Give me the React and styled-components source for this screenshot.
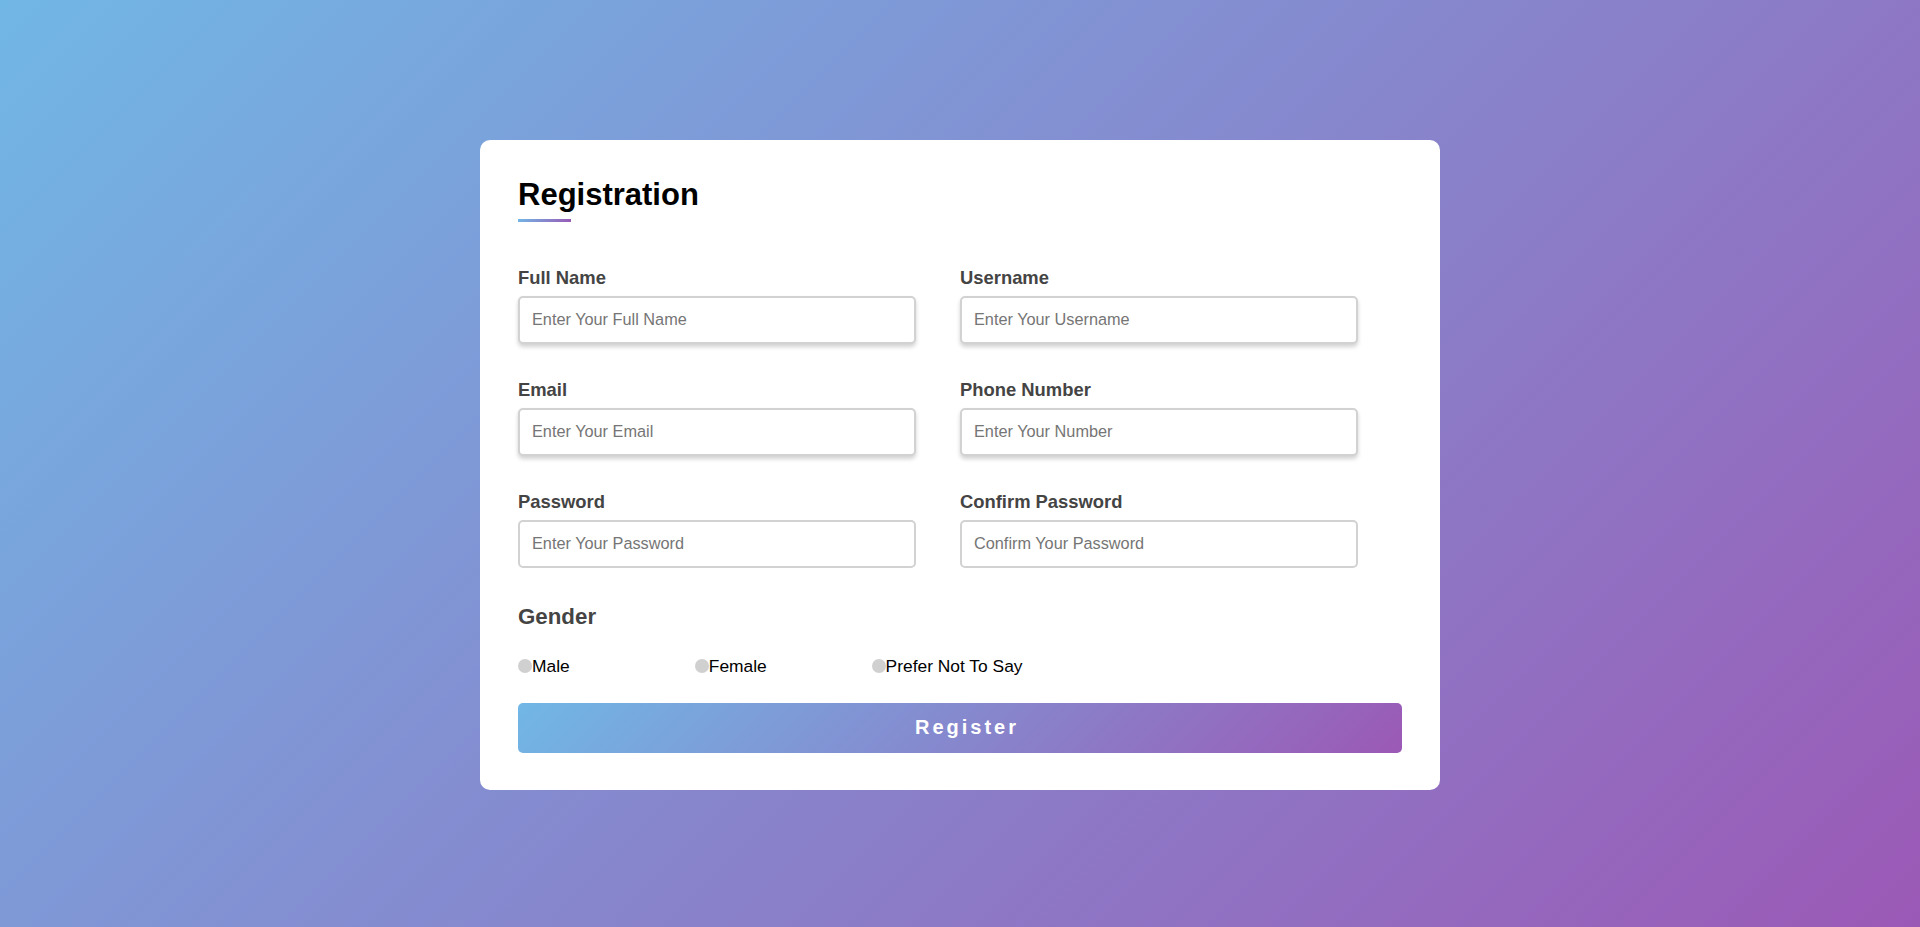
import React from "react";
import styled, { createGlobalStyle } from "styled-components";

const GlobalStyle = createGlobalStyle`
  * { box-sizing: border-box; }
  body {
    margin: 0;
    font-family: "Liberation Sans", Arial, sans-serif;
    background: linear-gradient(135deg, #71b7e6, #9b59b6);
    min-height: 100vh;
  }
`;

const fields = [
  { label: "Full Name", placeholder: "Enter Your Full Name", type: "text" },
  { label: "Username", placeholder: "Enter Your Username", type: "text" },
  { label: "Email", placeholder: "Enter Your Email", type: "email" },
  { label: "Phone Number", placeholder: "Enter Your Number", type: "tel" },
  { label: "Password", placeholder: "Enter Your Password", type: "password" },
  { label: "Confirm Password", placeholder: "Confirm Your Password", type: "password" },
];

const genders = ["Male", "Female", "Prefer Not To Say"];

const App = () => {
  return (
    <>
      <GlobalStyle />
      <Page>
        <Card>
          <Title>Registration</Title>
          <Underline />
          <Form onSubmit={(e) => e.preventDefault()}>
            <Grid>
              {fields.map((f) => (
                <Field key={f.label}>
                  <Label>{f.label}</Label>
                  <Input type={f.type} placeholder={f.placeholder} $flat={f.type === "password"} />
                </Field>
              ))}
            </Grid>
            <GenderTitle>Gender</GenderTitle>
            <GenderRow>
              {genders.map((g) => (
                <GenderOption key={g}>
                  <Radio type="radio" name="gender" />
                  {g}
                </GenderOption>
              ))}
            </GenderRow>
            <SubmitButton type="submit">Register</SubmitButton>
          </Form>
        </Card>
      </Page>
    </>
  );
};

export default App;

const Page = styled.div`
  min-height: 100vh;
  padding-top: 3px;
  display: flex;
  align-items: center;
  justify-content: center;
`;

const Card = styled.div`
  width: 960px;
  background: #fff;
  border-radius: 10px;
  padding: 37px 38px 37px;
`;

const Title = styled.h2`
  margin: 0;
  font-size: 31px;
  font-weight: 700;
  line-height: 1.15;
  color: #000;
`;

const Underline = styled.div`
  width: 53px;
  height: 3px;
  margin-top: 6px;
  background: linear-gradient(135deg, #71b7e6, #9b59b6);
`;

const Form = styled.form`
  margin-top: 45px;
`;

const Grid = styled.div`
  display: flex;
  flex-wrap: wrap;
`;

const Field = styled.div`
  width: 50%;
  margin-bottom: 35px;
`;

const Label = styled.label`
  display: block;
  font-size: 18.4px;
  line-height: 21px;
  font-weight: 700;
  color: #444;
  margin-bottom: 8px;
`;

const Input = styled.input`
  display: block;
  width: 90%;
  height: 48px;
  padding: 0 12px;
  font-family: "Liberation Sans", Arial, sans-serif;
  font-size: 16.3px;
  color: #333;
  border: 2px solid #d2d2d2;
  border-radius: 5px;
  outline: none;
  box-shadow: ${(p) => (p.$flat ? "none" : "0 3px 4px rgba(0, 0, 0, 0.18)")};

  &::placeholder {
    color: #757575;
  }
`;

const GenderTitle = styled.div`
  font-size: 22.3px;
  line-height: 1.15;
  font-weight: 700;
  color: #444;
  margin-top: 1px;
`;

const GenderRow = styled.div`
  display: flex;
  margin-top: 26px;
`;

const GenderOption = styled.label`
  width: 20%;
  display: flex;
  align-items: center;
  font-size: 17.4px;
  line-height: 1.15;
  color: #000;
`;

const Radio = styled.input`
  appearance: none;
  margin: 0;
  width: 14px;
  height: 14px;
  border-radius: 50%;
  background: #d0d0d0;
  flex-shrink: 0;
`;

const SubmitButton = styled.button`
  display: block;
  width: 100%;
  height: 50px;
  margin-top: 27px;
  border: none;
  border-radius: 5px;
  padding: 0 0 0 14px;
  background: linear-gradient(135deg, #71b7e6, #9b59b6);
  color: #fff;
  font-family: "Liberation Sans", Arial, sans-serif;
  font-size: 20px;
  font-weight: 700;
  letter-spacing: 3px;
  cursor: pointer;
`;
